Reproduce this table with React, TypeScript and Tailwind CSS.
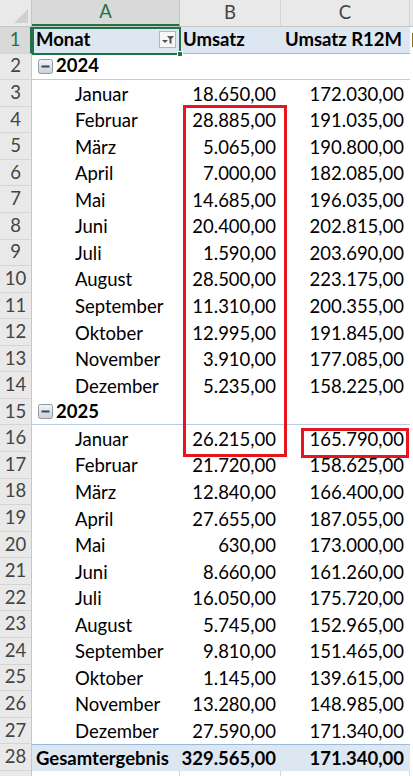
import React from "react";

type Row =
  | { kind: "head" }
  | { kind: "year"; label: string }
  | { kind: "month"; label: string; b: string; c: string }
  | { kind: "total"; b: string; c: string };

const months2024: [string, string, string][] = [
  ["Januar", "18.650,00", "172.030,00"],
  ["Februar", "28.885,00", "191.035,00"],
  ["März", "5.065,00", "190.800,00"],
  ["April", "7.000,00", "182.085,00"],
  ["Mai", "14.685,00", "196.035,00"],
  ["Juni", "20.400,00", "202.815,00"],
  ["Juli", "1.590,00", "203.690,00"],
  ["August", "28.500,00", "223.175,00"],
  ["September", "11.310,00", "200.355,00"],
  ["Oktober", "12.995,00", "191.845,00"],
  ["November", "3.910,00", "177.085,00"],
  ["Dezember", "5.235,00", "158.225,00"],
];

const months2025: [string, string, string][] = [
  ["Januar", "26.215,00", "165.790,00"],
  ["Februar", "21.720,00", "158.625,00"],
  ["März", "12.840,00", "166.400,00"],
  ["April", "27.655,00", "187.055,00"],
  ["Mai", "630,00", "173.000,00"],
  ["Juni", "8.660,00", "161.260,00"],
  ["Juli", "16.050,00", "175.720,00"],
  ["August", "5.745,00", "152.965,00"],
  ["September", "9.810,00", "151.465,00"],
  ["Oktober", "1.145,00", "139.615,00"],
  ["November", "13.280,00", "148.985,00"],
  ["Dezember", "27.590,00", "171.340,00"],
];

const rows: Row[] = [
  { kind: "head" },
  { kind: "year", label: "2024" },
  ...months2024.map(([label, b, c]) => ({ kind: "month" as const, label, b, c })),
  { kind: "year", label: "2025" },
  ...months2025.map(([label, b, c]) => ({ kind: "month" as const, label, b, c })),
  { kind: "total", b: "329.565,00", c: "171.340,00" },
];

function MinusBox() {
  return (
    <svg width="15" height="15" viewBox="0 0 15 15" className="mr-[3px] shrink-0">
      <defs>
        <linearGradient id="mb" x1="0" y1="0" x2="0" y2="1">
          <stop offset="0" stopColor="#f4f6f9" />
          <stop offset="1" stopColor="#c9d0da" />
        </linearGradient>
      </defs>
      <rect x="0.5" y="0.5" width="14" height="14" rx="2" fill="url(#mb)" stroke="#8e98a6" />
      <rect x="3.5" y="6.5" width="8" height="2" fill="#3c4450" />
    </svg>
  );
}

function FilterButton() {
  return (
    <div className="w-[17px] h-[17px] border border-[#b5b5b5] bg-[#f7f7f7] flex items-end justify-center pb-[2px] shrink-0">
      <svg width="12" height="9" viewBox="0 0 12 9">
        <path d="M0 4 L3 7 L6 4 Z" fill="#555" />
        <path d="M5 0 H12 L9.5 3 V8 L7.5 7 V3 Z" fill="#555" />
      </svg>
    </div>
  );
}

export default function App() {
  return (
    <div
      className="relative w-[413px] h-[776px] overflow-hidden bg-white text-[18.5px] text-black"
      style={{ fontFamily: "Lato, 'Open Sans', sans-serif" }}
    >
      {/* column headers */}
      <div className="flex h-[27px] bg-[#e9e9e9] border-b border-[#c6c6c6] text-[#444]">
        <div className="w-[32px] shrink-0 border-r border-[#c6c6c6] flex items-end justify-end p-[3px]">
          <svg width="14" height="14" viewBox="0 0 14 14">
            <path d="M14 0 V14 H0 Z" fill="#d0d0d0" />
          </svg>
        </div>
        <div className="w-[148px] shrink-0 bg-[#d9d9d9] border-r border-[#c6c6c6] border-b-2 border-b-[#217346] flex items-center justify-center text-[#217346]">
          A
        </div>
        <div className="w-[101px] shrink-0 border-r border-[#d4d4d4] flex items-center justify-center">B</div>
        <div className="w-[129px] shrink-0 border-r border-[#d4d4d4] flex items-center justify-center">C</div>
        <div className="flex-1" />
      </div>

      {rows.map((r, i) => {
        const n = i + 1;
        const isHead = r.kind === "head";
        const isTotal = r.kind === "total";
        const isYear = r.kind === "year";
        return (
          <div key={i} className="flex h-[26.57px]">
            <div
              className={
                isHead
                  ? "w-[32px] shrink-0 bg-[#d9d9d9] border-r-2 border-[#217346] border-b border-b-[#d4d4d4] flex items-center justify-center text-[#217346]"
                  : "w-[32px] shrink-0 bg-[#e9e9e9] border-r border-[#c6c6c6] border-b border-b-[#d4d4d4] flex items-center justify-center text-[#444]"
              }
            >
              {n}
            </div>
            <div
              className={
                isHead
                  ? "flex w-[378px] shrink-0 bg-[#dde7f2] border-b border-[#9bb9dc] font-bold"
                  : isTotal
                  ? "flex w-[378px] shrink-0 bg-[#dde7f2] border-t border-[#9bb9dc] font-bold"
                  : isYear
                  ? "flex w-[378px] shrink-0 border-b border-[#b7cde6] font-bold"
                  : "flex w-[378px] shrink-0"
              }
            >
              {r.kind === "head" && (
                <>
                  <div className="w-[148px] flex items-center pl-[4px] pr-[4px] justify-between">
                    <span>Monat</span>
                    <FilterButton />
                  </div>
                  <div className="w-[101px] flex items-center pl-[3px]">Umsatz</div>
                  <div className="w-[129px] flex items-center pl-[4px]">Umsatz R12M</div>
                </>
              )}
              {r.kind === "year" && (
                <div className="w-[148px] flex items-center pl-[6px]">
                  <MinusBox />
                  <span>{r.label}</span>
                </div>
              )}
              {r.kind === "month" && (
                <>
                  <div className="w-[148px] flex items-center pl-[43px] pt-[2px]">{r.label}</div>
                  <div className="w-[101px] flex items-center justify-end pr-[5px] pt-[2px]">{r.b}</div>
                  <div className="w-[129px] flex items-center justify-end pr-[6px] pt-[2px]">{r.c}</div>
                </>
              )}
              {r.kind === "total" && (
                <>
                  <div className="w-[148px] flex items-center pl-[4px] pt-[1px]">Gesamtergebnis</div>
                  <div className="w-[101px] flex items-center justify-end pr-[5px] pt-[1px]">{r.b}</div>
                  <div className="w-[129px] flex items-center justify-end pr-[6px] pt-[1px]">{r.c}</div>
                </>
              )}
            </div>
            <div className="flex-1 flex items-center">
              {isHead && <span className="ml-[2px] w-[2px] h-[14px] bg-[#a0622d]" />}
            </div>
          </div>
        );
      })}

      {/* row 29 peek */}
      <div className="flex h-[6px]">
        <div className="w-[32px] shrink-0 bg-[#e9e9e9] border-r border-[#c6c6c6]" />
        <div className="w-[148px] shrink-0 border-r border-[#d4d4d4]" />
        <div className="w-[101px] shrink-0 border-r border-[#d4d4d4]" />
        <div className="w-[129px] shrink-0 border-r border-[#d4d4d4]" />
      </div>

      {/* active cell A1 */}
      <div className="absolute left-[32px] top-[27px] w-[149px] h-[28px] border-2 border-[#217346] pointer-events-none" />
      <div className="absolute left-[177px] top-[51px] w-[6px] h-[6px] bg-[#217346] border border-white" />

      {/* red highlight boxes */}
      <div className="absolute left-[183px] top-[105px] w-[104px] h-[352px] border-[3px] border-[#e5161e]" />
      <div className="absolute left-[301px] top-[428px] w-[108px] h-[30px] border-[3px] border-[#e5161e]" />
    </div>
  );
}
